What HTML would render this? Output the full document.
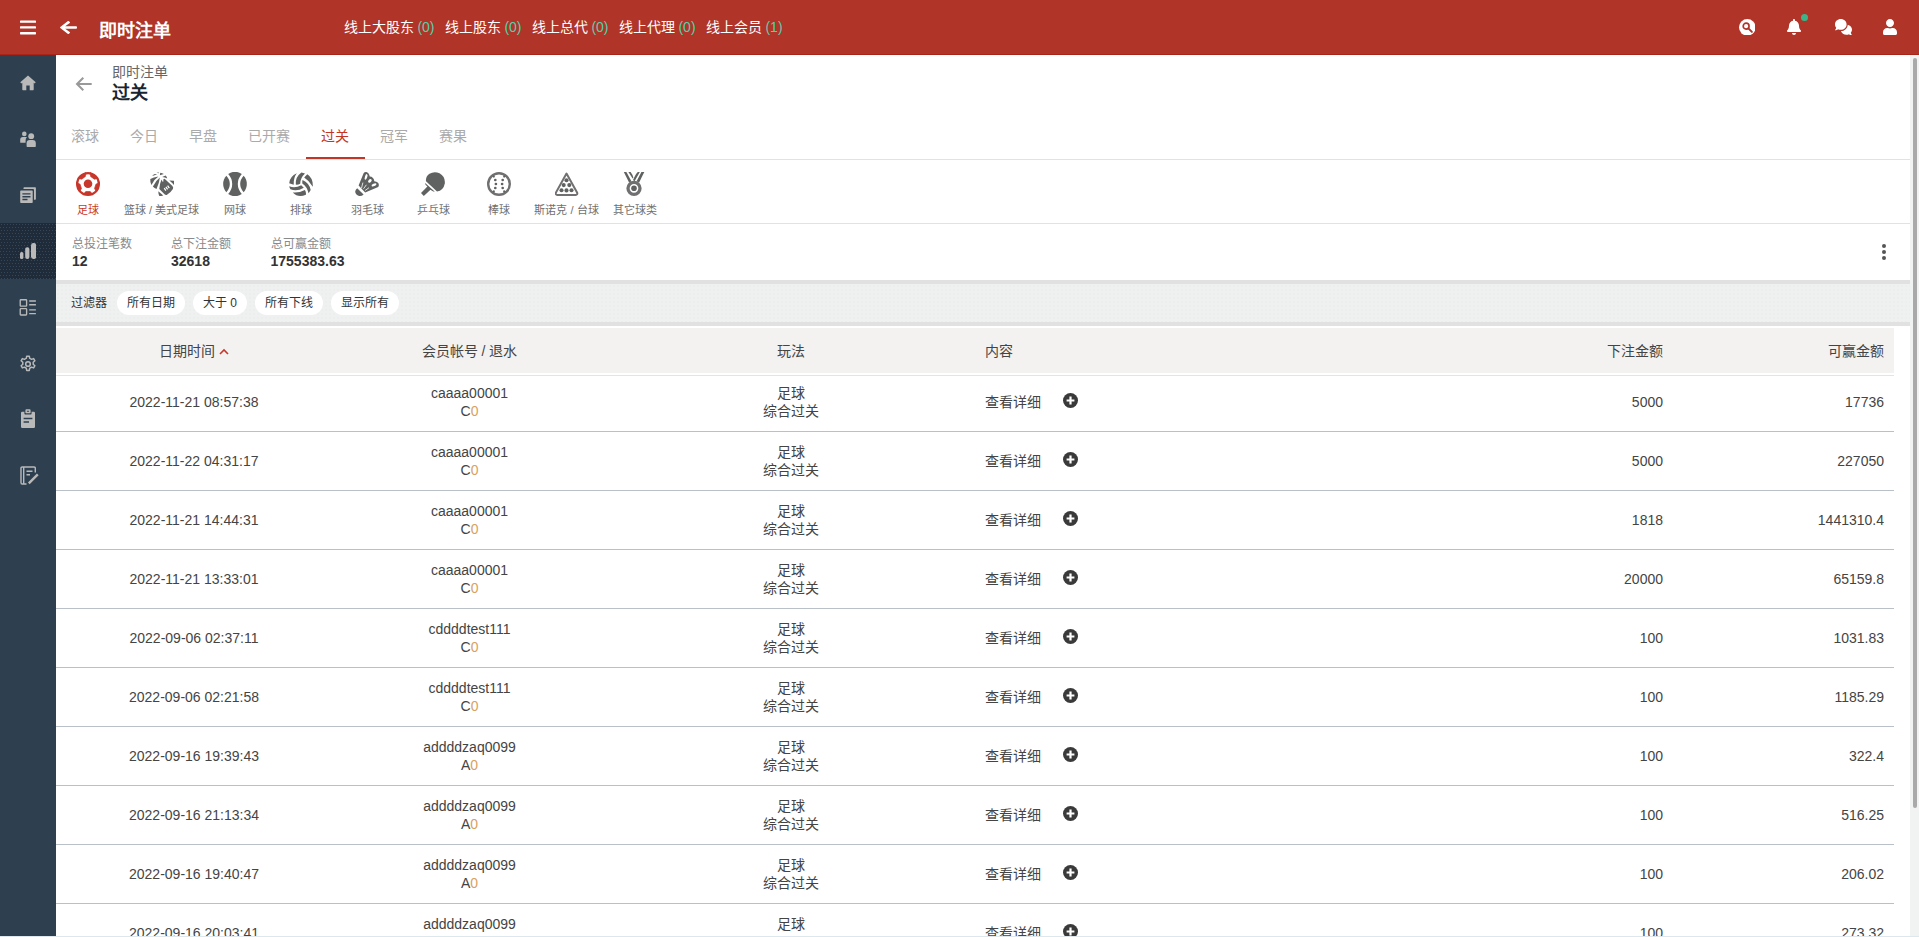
<!DOCTYPE html>
<html lang="zh-CN">
<head>
<meta charset="utf-8">
<title>即时注单</title>
<style>
*{box-sizing:border-box;margin:0;padding:0}
html,body{width:1919px;height:937px;overflow:hidden;background:#fff}
body{font-family:"Liberation Sans",sans-serif;font-size:14px;color:#444;position:relative}
.abs{position:absolute}
/* header */
#hdr{position:absolute;left:0;top:0;width:1919px;height:55px;background:#b03428;border-bottom:1px solid #a82418}
#hdr .title{position:absolute;left:99px;top:19px;font-size:18px;line-height:24px;font-weight:bold;color:#fff;white-space:nowrap}
#hdr .online{position:absolute;left:343.5px;top:17px;height:20px;line-height:20px;font-size:14px;color:#fff;white-space:nowrap}
#hdr .online span{display:inline-block;margin-right:10px}
#hdr .online b{font-weight:normal;color:#56cfa8}
/* sidebar */
#side{position:absolute;left:0;top:55px;width:56px;height:881px;background:#2e4050}
#side .it{position:absolute;left:0;width:56px;height:56px}
#side .it.act{background-color:#1f2b38;background-image:radial-gradient(circle at 0.5px 0.5px,#35485b 0.5px,transparent 0.55px),radial-gradient(circle at 0.5px 0.5px,#35485b 0.5px,transparent 0.55px);background-size:3px 6px;background-position:1px 1px,3px 4px}
#side svg{position:absolute;left:20px;top:20px;width:16px;height:16px}
/* content */
#main{position:absolute;left:56px;top:55px;width:1854px;height:882px;background:#fff;overflow:hidden}
.crumb{position:absolute;left:56px;top:8px;font-size:14px;line-height:18px;color:#666;white-space:nowrap}
.ptitle{position:absolute;left:56px;top:26px;font-size:18px;line-height:24px;font-weight:bold;color:#1a2532;white-space:nowrap}
.tabs{position:absolute;left:-0.5px;top:63px;height:41px;white-space:nowrap;font-size:0}
.tabs span{display:inline-block;height:41px;line-height:36px;padding:0 15.5px;font-size:14px;color:#aaa}
.tabs span.on{color:#c23527;border-bottom:2px solid #c23527}
.hline{position:absolute;left:0;width:1854px;height:1px;background:#e2e2e2}
.sp{position:absolute;top:117px;width:100px;text-align:center;margin-left:-50px;color:#707070;font-size:11px;line-height:14px;white-space:nowrap}
.sp svg{display:block;margin:0 auto 7px;width:24px;height:24px;fill:#606262}
.sp.on{color:#c8372b}
.sp.on svg{fill:#c8372b}
.st{position:absolute;top:181px;white-space:nowrap}
.st i{display:block;font-style:normal;font-size:12px;line-height:16px;color:#8a8a8a}
.st b{display:block;font-size:14px;line-height:18px;color:#333;margin-top:0}
#filt{position:absolute;left:0;top:225px;width:1854px;height:46px;border-top:4px solid #e1e1e1;border-bottom:4px solid #e1e1e1;background-color:#eff1f1;background-image:radial-gradient(circle,#e6e8e8 0.5px,transparent 0.8px);background-size:4px 4px}
#filt .lbl{position:absolute;left:15px;top:11px;font-size:12px;line-height:16px;color:#333}
#filt .chip{position:absolute;top:7px;height:24px;line-height:24px;border-radius:12px;background:#fff;font-size:12px;color:#333;padding:0 10px;white-space:nowrap}
/* table */
#tbl{position:absolute;left:0;top:273px;width:1838px}
#thead{position:absolute;left:0;top:0;width:1838px;height:45px;background:#f3f2f1}
#thead div{position:absolute;top:0;height:45px;line-height:47px;font-size:14px;color:#444;white-space:nowrap}
.row{position:absolute;left:0;width:1838px;height:59px;border-bottom:1px solid #b9c0c8}
.row div{position:absolute;white-space:nowrap;font-size:14px;line-height:18px;color:#444}
.c1{left:0;width:276px;text-align:center;top:20px}
.c2{left:276px;width:275px;text-align:center;top:11px}
.c2 em{font-style:normal;color:#d9a15f}
.c3{left:551px;width:368px;text-align:center;top:11px}
.c4{left:929px;top:20px}
.c5{left:919px;width:688px;text-align:right;top:20px}
.c6{left:1617px;width:211px;text-align:right;top:20px}
.row.last .c2,.row.last .c3{height:19px;overflow:hidden}
.plus{position:absolute;left:1007px;top:20px;width:15px;height:15px}
/* scrollbar */
#sb{position:absolute;left:1910px;top:55px;width:9px;height:882px;background:#f1f2f2}
#sb i{position:absolute;left:3px;top:3px;width:4px;height:750px;border-radius:2px;background:#a9a9a9}
</style>
</head>
<body>
<div id="hdr">
  <svg class="abs" style="left:20px;top:20px" width="16" height="15" viewBox="0 0 16 15"><rect x="0" y="0.5" width="16" height="2.3" rx="0.6" fill="#fff"/><rect x="0" y="6.3" width="16" height="2.3" rx="0.6" fill="#fff"/><rect x="0" y="12.1" width="16" height="2.3" rx="0.6" fill="#fff"/></svg>
  <svg class="abs" style="left:59.5px;top:19.5px" width="17" height="15" viewBox="0 0 448 512" preserveAspectRatio="none"><path fill="#fff" d="M257.5 445.1l-22.2 22.2c-9.4 9.4-24.6 9.4-33.9 0L7 273c-9.4-9.4-9.400-24.600 0-33.900L201.400 44.700c9.400-9.400 24.600-9.400 33.900 0l22.200 22.200c9.500 9.500 9.300 25-.4 34.300L136.600 216H424c13.300 0 24 10.700 24 24v32c0 13.300-10.700 24-24 24H136.600l120.500 114.800c9.800 9.300 10 24.800.4 34.300z"/></svg>
  <div class="title">即时注单</div>
  <div class="online"><span>线上大股东 <b>(0)</b></span><span>线上股东 <b>(0)</b></span><span>线上总代 <b>(0)</b></span><span>线上代理 <b>(0)</b></span><span>线上会员 <b>(1)</b></span></div>
<svg class="abs" style="left:1738.800px;top:18.700px" width="16.600" height="16.600" viewBox="0 0 17 17"><circle cx="8.500" cy="8.500" r="8.500" fill="#fff"/><circle cx="7.300" cy="7.300" r="3" fill="none" stroke="#b03428" stroke-width="1.700"/><path d="M9.600 9.600 L13.200 13.200" stroke="#b03428" stroke-width="2" stroke-linecap="round"/></svg>
<svg class="abs" style="left:1787px;top:19px" width="14" height="16" viewBox="0 0 448 512"><path fill="#fff" d="M224 512c35.320 0 63.970-28.650 63.970-64H160.030c0 35.350 28.650 64 63.970 64zm215.390-149.710c-19.320-20.760-55.470-51.990-55.470-154.290 0-77.700-54.480-139.900-127.940-155.160V32c0-17.670-14.320-32-31.980-32s-31.980 14.330-31.980 32v20.840C118.560 68.100 64.080 130.300 64.080 208c0 102.300-36.150 133.530-55.470 154.290-6 6.450-8.660 14.160-8.610 21.710.11 16.400 12.980 32 32.100 32h383.800c19.120 0 32-15.600 32.100-32 .05-7.550-2.610-15.270-8.610-21.710z"/></svg>
<div class="abs" style="left:1801px;top:14px;width:7px;height:7px;border-radius:50%;background:#3cb489"></div>
<svg class="abs" style="left:1834.500px;top:19px" width="17" height="16.4" viewBox="0 0 17 14.5" preserveAspectRatio="none"><path fill="#fff" d="M5.800 0 C2.600 0 0 2.100 0 4.800 C0 5.900 0.500 6.900 1.200 7.700 C1 8.500 0.500 9.300 0.100 9.700 C0 9.800 0.100 10 0.200 10 C1.300 10 2.300 9.600 3 9.100 C3.900 9.400 4.800 9.600 5.800 9.600 C9 9.600 11.600 7.500 11.600 4.800 C11.600 2.100 9 0 5.800 0 Z"/><path fill="#fff" d="M12.700 5 C12.600 8 9.600 10.700 5.900 10.700 C6.700 12.600 8.800 14 11.300 14 C12.300 14 13.200 13.800 14 13.500 C14.700 14 15.700 14.400 16.800 14.400 C17 14.400 17 14.200 16.900 14.100 C16.500 13.700 16 12.900 15.800 12.100 C16.500 11.300 17 10.300 17 9.200 C17 7.200 15.200 5.500 12.700 5 Z"/></svg>
<svg class="abs" style="left:1883px;top:19px" width="14" height="16" viewBox="0 0 448 512"><path fill="#fff" d="M224 256c70.700 0 128-57.300 128-128S294.700 0 224 0 96 57.300 96 128s57.300 128 128 128zm89.600 32h-16.700c-22.200 10.200-46.900 16-72.900 16s-50.600-5.800-72.900-16h-16.700C60.200 288 0 348.200 0 422.400V464c0 26.500 21.500 48 48 48h352c26.500 0 48-21.500 48-48v-41.600c0-74.200-60.200-134.400-134.400-134.400z"/></svg>
</div>
<div id="side">
<div class="it" style="top:0px"><svg style="" viewBox="0 0 16 16"><path fill="#b9b9b9" d="M8 0.6 L0.3 7.3 L1.3 8.5 L2.3 7.7 V14.6 Q2.3 15.2 2.9 15.2 H6.3 V10.6 H9.7 V15.2 H13.1 Q13.7 15.2 13.7 14.6 V7.7 L14.7 8.5 L15.7 7.3 Z"/></svg></div>
<div class="it" style="top:56px"><svg style="" viewBox="0 0 16 16"><circle cx="4.3" cy="2.9" r="2.3" fill="#b9b9b9"/><path fill="#b9b9b9" d="M0.2 11.2 V8.6 Q0.2 5.9 2.9 5.9 H5.5 Q6.4 5.9 7 6.3 Q5.6 7.4 5.6 9.2 V11.2 Q5.6 11.7 5.1 11.7 H0.7 Q0.2 11.7 0.2 11.2 Z"/><circle cx="11.2" cy="5.2" r="2.9" fill="#b9b9b9"/><path fill="#b9b9b9" d="M6.6 15.3 V12.3 Q6.6 9.1 9.8 9.1 H12.6 Q15.8 9.1 15.8 12.3 V15.3 Q15.8 16 15.1 16 H7.3 Q6.6 16 6.6 15.3 Z"/></svg></div>
<div class="it" style="top:112px"><svg style="" viewBox="0 0 16 16"><path fill="#b9b9b9" d="M4.2 0.2 H15.2 Q15.9 0.2 15.9 0.9 V12 Q15.9 12.7 15.2 12.7 H14 V3 Q14 2.1 13.1 2.1 H3.5 V0.9 Q3.5 0.2 4.2 0.2 Z"/><path fill="#b9b9b9" fill-rule="evenodd" d="M0.9 3.4 H12 Q12.7 3.4 12.7 4.1 V15.2 Q12.7 15.9 12 15.9 H0.9 Q0.2 15.9 0.2 15.2 V4.1 Q0.2 3.4 0.9 3.4 Z M2.4 6.2 V7.6 H10.5 V6.2 Z M2.4 9 V10.4 H10.5 V9 Z M2.4 11.8 V13.2 H7.5 V11.8 Z"/></svg></div>
<div class="it act" style="top:168px"><svg style="" viewBox="0 0 16 16"><rect x="0" y="9" width="3.400" height="7" rx="1.500" fill="#b9b9b9"/><rect x="5.200" y="4.200" width="4.200" height="11.800" rx="1.900" fill="#b9b9b9"/><rect x="11" y="0" width="5.200" height="16" rx="2.400" fill="#b9b9b9"/></svg></div>
<div class="it" style="top:224px"><svg style="left:19.2px;top:20px;width:17.5px;height:16.5px" viewBox="0 0 16 16" fill="none" stroke="#b9b9b9" stroke-width="1.3"><rect x="0.7" y="0.7" width="6.2" height="6.2" rx="0.6"/><rect x="0.7" y="9.3" width="6.2" height="6.2" rx="0.6"/><path d="M9.4 1.9 H15.9 M9.4 5.6 H15.9 M9.4 10.5 H15.9 M9.4 14.2 H15.9"/></svg></div>
<div class="it" style="top:280px"><svg style="left:19px;top:19.5px;width:18px;height:18px" viewBox="0 0 24 24" fill="none" stroke="#b9b9b9" stroke-width="2" stroke-linejoin="round"><path d="M10.3 1.5 h3.4 l0.6 3 a8 8 0 0 1 2.3 1.3 l2.9-1 l1.7 2.9 l-2.3 2 a8 8 0 0 1 0 2.6 l2.3 2 l-1.7 2.9 l-2.9-1 a8 8 0 0 1 -2.3 1.3 l-0.6 3 h-3.4 l-0.6-3 a8 8 0 0 1 -2.300-1.300 l-2.9 1 l-1.7-2.9 l2.3-2 a8 8 0 0 1 0-2.600 l-2.300-2 l1.700-2.900 l2.900 1 a8 8 0 0 1 2.300-1.300 z"/><circle cx="12" cy="12" r="3.1"/></svg></div>
<div class="it" style="top:336px"><svg style="left:20px;top:18.3px;width:16px;height:19.5px" viewBox="0 0 16 18" preserveAspectRatio="none"><path fill="#b9b9b9" fill-rule="evenodd" d="M2.200 2.600 H4.400 V4.200 Q4.400 5 5.200 5 H10.800 Q11.600 5 11.600 4.200 V2.600 H13.800 Q15 2.600 15 3.800 V16.400 Q15 17.600 13.800 17.600 H2.200 Q1 17.600 1 16.400 V3.800 Q1 2.600 2.200 2.600 Z M3.600 8 V9.400 H12.400 V8 Z M3.600 11.200 V12.600 H9 V11.200 Z"/><path fill="#b9b9b9" fill-rule="evenodd" d="M6.400 0.300 H9.600 Q10.600 0.300 10.600 1.300 V3.200 Q10.600 3.900 9.900 3.900 H6.100 Q5.400 3.900 5.400 3.200 V1.300 Q5.400 0.300 6.400 0.300 Z M6.900 1.500 V2.500 H9.100 V1.500 Z"/></svg></div>
<div class="it" style="top:392px"><svg style="left:19.7px;top:18.7px;width:19px;height:19px" viewBox="0 0 19 19" fill="none" stroke="#b9b9b9" stroke-width="1.4"><path d="M15.300 6.500 V2.200 Q15.300 1 14.100 1 H2.200 Q1 1 1 2.200 V16.800 Q1 18 2.200 18 H6.500"/><path d="M3.700 1 V18" /><path d="M6.500 5.300 H12.500 M6.500 8.700 H10"/><path d="M17.800 8.300 L8.800 17.300" stroke-width="2.400"/></svg></div>
</div>
<div id="main">
<svg class="abs" style="left:16px;top:17px" width="24" height="24" viewBox="0 0 24 24"><path d="M19.700 12 H5.600 M11.300 5.700 L5 12 L11.300 18.300" stroke="#999" stroke-width="2" fill="none"/></svg>
<div class="crumb">即时注单</div><div class="ptitle">过关</div>
<div class="tabs"><span class="">滚球</span><span class="">今日</span><span class="">早盘</span><span class="">已开赛</span><span class="on">过关</span><span class="">冠军</span><span class="">赛果</span></div>
<div class="hline" style="top:104px"></div>
<div class="sp on" style="left:32px"><svg fill="currentColor" viewBox="0 0 24 24"><circle cx="12" cy="12" r="10.900" fill="none" stroke="currentColor" stroke-width="2.200"/><path d="M14.30 19.60 L9.70 19.60 L7.10 22.60 L16.90 22.60 Z M5.48 16.54 L4.06 12.16 L0.40 10.62 L3.43 19.94 Z M5.67 7.20 L9.39 4.50 L9.73 0.54 L1.81 6.30 Z M14.61 4.50 L18.33 7.20 L22.19 6.30 L14.27 0.54 Z M19.94 12.16 L18.52 16.54 L20.57 19.94 L23.60 10.62 Z" stroke="currentColor" stroke-width="0.700" stroke-linejoin="round"/><circle cx="12" cy="11.800" r="4.300"/></svg>足球</div>
<div class="sp" style="left:105.5px"><svg fill="currentColor" viewBox="0 0 24 24"><path d="M0.300 7 Q3.500 5.200 8.400 4.600 Q3.500 8 1.400 12.900 Q0 10 0.300 7 Z"/><path d="M9.900 5.600 Q9.200 11.500 6.500 17 Q4.500 16.200 2.900 14.500 Q5.500 9 9.900 5.600 Z"/><path d="M2.200 4 Q3.200 2.800 4.800 2.100 L7.200 2.500 Q4.500 3 2.200 4 Z"/><path d="M6.600 0.700 Q7.800 0.300 9 0.500 L8.600 1.300 Z"/><path d="M10.300 0.700 Q12.200 0.900 13.900 1.900 L9.900 3.200 Z"/><path d="M12.200 4.900 L15.600 3.600 Q16.800 4.800 17.200 6.400 Q15 5 12.200 4.900 Z"/><path fill-rule="evenodd" d="M11.500 7.600 L12.600 9.800 L13.300 9.700 L13.400 7.200 L14.600 6.800 L22.400 14.100 Q23.700 15.500 22.900 17.100 Q20.600 21 16.700 22.900 Q15.400 23.300 14.500 22.200 L9.300 16.900 Q9.800 11.500 11.500 7.600 Z M13.700 16.400 l1.700 2.500 l1 -0.650 l-1.700 -2.500 Z M15.400 15.200 l1.700 2.500 l1 -0.650 l-1.700 -2.500 Z M17.100 14 l1.700 2.500 l1 -0.650 l-1.700 -2.500 Z"/><path d="M19.300 8.400 L23.900 8.800 Q24.400 11 24.200 13.200 Q22 10.500 19.300 8.400 Z"/><path d="M8.300 19.200 L13.300 23.400 Q11 24.300 9.400 24.100 Q8.300 22 8.300 19.200 Z"/></svg>篮球 / 美式足球</div>
<div class="sp" style="left:179px"><svg fill="currentColor" viewBox="0 0 24 24"><path d="M5.200 2.100 A12 12 0 0 1 18.800 2.100 Q14.800 6.500 14.800 12 Q14.800 17.500 18.800 21.900 A12 12 0 0 1 5.200 21.900 Q9.200 17.500 9.200 12 Q9.200 6.500 5.200 2.100 Z"/><path d="M3.400 3.800 Q6.800 7.500 6.800 12 Q6.800 16.500 3.400 20.200 A12 12 0 0 1 3.400 3.800 Z"/><path d="M20.600 3.800 Q17.200 7.500 17.200 12 Q17.200 16.500 20.600 20.200 A12 12 0 0 0 20.600 3.800 Z"/></svg>网球</div>
<div class="sp" style="left:245px"><svg fill="currentColor" viewBox="0 0 24 24"><path d="M7.800 1.300 Q0.800 4.500 0.200 11.200 L4.700 12.800 Q4.300 6 7.800 1.300 Z"/><path d="M12.400 0.400 L16 1.500 Q11.200 6 11.200 11.800 Q9 12.900 6.800 12.600 Q6 5 12.400 0.400 Z"/><path d="M15.200 5.500 L18.300 2.300 Q24.200 6 23.800 14.700 Q20 8.500 15.200 5.500 Z"/><path d="M13.500 8.100 Q20.200 11 21.700 18 L19.600 21.300 Q18 14.500 13.300 11.400 Q13.200 9.600 13.500 8.100 Z"/><path d="M0.200 14.200 Q6 16.500 12.200 13.200 L14.800 15.700 Q8 20 1.400 17.300 Q0.500 15.800 0.200 14.200 Z"/><path d="M3.800 20.400 Q10 21 15.900 18 Q17.300 20 16.900 22.700 Q9 26 3.800 20.400 Z"/></svg>排球</div>
<div class="sp" style="left:311px"><svg fill="currentColor" viewBox="0 0 24 24"><path d="M3.600 13.600 L8.600 1.200 Q9.600 -0.200 11.400 0.100 Q13.600 0.600 14.200 2.800 L14.800 4.600 Q16.600 4.600 18 6 Q19.200 7.400 19.300 9.200 Q21.600 9.200 23 10.800 Q24.600 12.800 23.200 14.900 L10.200 20.600 Z"/><ellipse cx="11.100" cy="4.900" rx="1.150" ry="2.900" fill="#fff" transform="rotate(18 11.100 4.900)"/><ellipse cx="14.900" cy="8.900" rx="1.500" ry="2.100" fill="#fff" transform="rotate(40 14.900 8.900)"/><ellipse cx="19" cy="12.900" rx="1.300" ry="2.600" fill="#fff" transform="rotate(66 19 12.900)"/><path d="M6.500 16.200 L7.900 10.600 M8.500 16.800 L11.400 12.800 M10.100 18.500 L14 15.700" stroke="#fff" stroke-width="0.800" fill="none"/><path d="M2.200 16.200 L8.600 22.400 Q6.500 24.500 3.500 23.800 Q0 22.500 0.300 19 Q0.800 17.200 2.200 16.200 Z"/></svg>羽毛球</div>
<div class="sp" style="left:377px"><svg fill="currentColor" viewBox="0 0 24 24"><path d="M5 9.300 Q4.500 4.500 8.500 1.800 Q13 -1 18.500 1.200 Q24.500 4.500 23.800 11.500 Q22.500 18.500 16 19.600 Z"/><path d="M4.200 11 L13.600 19.600 Q12 19.800 10.600 18.600 L9.500 17.800 L2.800 24 L0 21 L6.400 14.600 L5 13.200 Q4 12.200 4.200 11 Z"/></svg>乒乓球</div>
<div class="sp" style="left:443px"><svg fill="currentColor" viewBox="0 0 24 24"><circle cx="12" cy="12" r="10.800" fill="none" stroke="currentColor" stroke-width="2.400"/><g><circle cx="8.300" cy="8" r="1.350"/><circle cx="8.900" cy="12" r="1.350"/><circle cx="8.300" cy="16" r="1.350"/><circle cx="15.700" cy="8" r="1.350"/><circle cx="15.100" cy="12" r="1.350"/><circle cx="15.700" cy="16" r="1.350"/><circle cx="6.800" cy="4.600" r="1.100"/><circle cx="17.200" cy="4.600" r="1.100"/><circle cx="6.800" cy="19.400" r="1.100"/><circle cx="17.200" cy="19.400" r="1.100"/></g></svg>棒球</div>
<div class="sp" style="left:510.5px"><svg fill="currentColor" viewBox="0.500 0 24 24"><path d="M12 1.600 L22.700 20.800 Q23.200 22.700 21.200 22.900 H2.800 Q0.800 22.700 1.300 20.800 Z" fill="none" stroke="currentColor" stroke-width="2" stroke-linejoin="round"/><circle cx="12" cy="8.300" r="2.050"/><circle cx="9.200" cy="13.100" r="2.050"/><circle cx="14.800" cy="13.100" r="2.050"/><circle cx="7" cy="18.200" r="2.050"/><circle cx="12" cy="18.400" r="2.050"/><circle cx="17" cy="18.200" r="2.050"/></svg>斯诺克 / 台球</div>
<div class="sp" style="left:578.5px"><svg fill="currentColor" viewBox="1 0 24 24"><path d="M1.800 0 H4.400 L9.400 9.300 L7.200 10.800 Z"/><path d="M6.400 0 H8.600 Q10.600 2.500 11.400 5.800 L10.600 6.600 Z"/><path d="M22.300 0 H19.400 L14.600 9.200 L17 10.800 Z"/><path d="M17.800 0 H15.800 Q13.500 2 12.200 5.500 L11 8 L12.600 9.200 Z"/><circle cx="12" cy="16.300" r="6" fill="none" stroke="currentColor" stroke-width="3.300"/><circle cx="12" cy="16.300" r="2.800"/></svg>其它球类</div>
<div class="hline" style="top:168px"></div>
<div class="st" style="left:16px"><i>总投注笔数</i><b>12</b></div>
<div class="st" style="left:115px"><i>总下注金额</i><b>32618</b></div>
<div class="st" style="left:214.5px"><i>总可赢金额</i><b>1755383.63</b></div>
<svg class="abs" style="left:1825px;top:188px" width="6" height="18" viewBox="0 0 6 18"><circle cx="3" cy="3" r="2" fill="#555"/><circle cx="3" cy="9" r="2" fill="#555"/><circle cx="3" cy="15" r="2" fill="#555"/></svg>
<div id="filt"><div class="lbl">过滤器</div><div class="chip" style="left:61px">所有日期</div><div class="chip" style="left:137px">大于 0</div><div class="chip" style="left:199px">所有下线</div><div class="chip" style="left:275px">显示所有</div></div>
<div id="tbl"><div id="thead"><div style="left:0;width:276px;text-align:center">日期时间 <svg width="10" height="7" viewBox="0 0 10 7" style="vertical-align:1px"><path d="M1 6 L5 2 L9 6" fill="none" stroke="#c8372b" stroke-width="1.600"/></svg></div><div style="left:276px;width:275px;text-align:center">会员帐号 / 退水</div><div style="left:551px;width:368px;text-align:center">玩法</div><div style="left:929px">内容</div><div style="left:919px;width:688px;text-align:right">下注金额</div><div style="left:1617px;width:211px;text-align:right">可赢金额</div></div><div class="hline" style="top:47px;width:1838px;background:#e4e4e4"></div>
<div class="row" style="top:45px"><div class="c1">2022-11-21 08:57:38</div><div class="c2">caaaa00001<br>C<em>0</em></div><div class="c3">足球<br>综合过关</div><div class="c4">查看详细</div><svg class="plus" viewBox="0 0 15 15"><circle cx="7.500" cy="7.500" r="7.500" fill="#3a3a3a"/><path d="M7.500 3.600 V11.400 M3.600 7.500 H11.400" stroke="#fff" stroke-width="2.200"/></svg><div class="c5">5000</div><div class="c6">17736</div></div>
<div class="row" style="top:104px"><div class="c1">2022-11-22 04:31:17</div><div class="c2">caaaa00001<br>C<em>0</em></div><div class="c3">足球<br>综合过关</div><div class="c4">查看详细</div><svg class="plus" viewBox="0 0 15 15"><circle cx="7.500" cy="7.500" r="7.500" fill="#3a3a3a"/><path d="M7.500 3.600 V11.400 M3.600 7.500 H11.400" stroke="#fff" stroke-width="2.200"/></svg><div class="c5">5000</div><div class="c6">227050</div></div>
<div class="row" style="top:163px"><div class="c1">2022-11-21 14:44:31</div><div class="c2">caaaa00001<br>C<em>0</em></div><div class="c3">足球<br>综合过关</div><div class="c4">查看详细</div><svg class="plus" viewBox="0 0 15 15"><circle cx="7.500" cy="7.500" r="7.500" fill="#3a3a3a"/><path d="M7.500 3.600 V11.400 M3.600 7.500 H11.400" stroke="#fff" stroke-width="2.200"/></svg><div class="c5">1818</div><div class="c6">1441310.4</div></div>
<div class="row" style="top:222px"><div class="c1">2022-11-21 13:33:01</div><div class="c2">caaaa00001<br>C<em>0</em></div><div class="c3">足球<br>综合过关</div><div class="c4">查看详细</div><svg class="plus" viewBox="0 0 15 15"><circle cx="7.500" cy="7.500" r="7.500" fill="#3a3a3a"/><path d="M7.500 3.600 V11.400 M3.600 7.500 H11.400" stroke="#fff" stroke-width="2.200"/></svg><div class="c5">20000</div><div class="c6">65159.8</div></div>
<div class="row" style="top:281px"><div class="c1">2022-09-06 02:37:11</div><div class="c2">cddddtest111<br>C<em>0</em></div><div class="c3">足球<br>综合过关</div><div class="c4">查看详细</div><svg class="plus" viewBox="0 0 15 15"><circle cx="7.500" cy="7.500" r="7.500" fill="#3a3a3a"/><path d="M7.500 3.600 V11.400 M3.600 7.500 H11.400" stroke="#fff" stroke-width="2.200"/></svg><div class="c5">100</div><div class="c6">1031.83</div></div>
<div class="row" style="top:340px"><div class="c1">2022-09-06 02:21:58</div><div class="c2">cddddtest111<br>C<em>0</em></div><div class="c3">足球<br>综合过关</div><div class="c4">查看详细</div><svg class="plus" viewBox="0 0 15 15"><circle cx="7.500" cy="7.500" r="7.500" fill="#3a3a3a"/><path d="M7.500 3.600 V11.400 M3.600 7.500 H11.400" stroke="#fff" stroke-width="2.200"/></svg><div class="c5">100</div><div class="c6">1185.29</div></div>
<div class="row" style="top:399px"><div class="c1">2022-09-16 19:39:43</div><div class="c2">addddzaq0099<br>A<em>0</em></div><div class="c3">足球<br>综合过关</div><div class="c4">查看详细</div><svg class="plus" viewBox="0 0 15 15"><circle cx="7.500" cy="7.500" r="7.500" fill="#3a3a3a"/><path d="M7.500 3.600 V11.400 M3.600 7.500 H11.400" stroke="#fff" stroke-width="2.200"/></svg><div class="c5">100</div><div class="c6">322.4</div></div>
<div class="row" style="top:458px"><div class="c1">2022-09-16 21:13:34</div><div class="c2">addddzaq0099<br>A<em>0</em></div><div class="c3">足球<br>综合过关</div><div class="c4">查看详细</div><svg class="plus" viewBox="0 0 15 15"><circle cx="7.500" cy="7.500" r="7.500" fill="#3a3a3a"/><path d="M7.500 3.600 V11.400 M3.600 7.500 H11.400" stroke="#fff" stroke-width="2.200"/></svg><div class="c5">100</div><div class="c6">516.25</div></div>
<div class="row" style="top:517px"><div class="c1">2022-09-16 19:40:47</div><div class="c2">addddzaq0099<br>A<em>0</em></div><div class="c3">足球<br>综合过关</div><div class="c4">查看详细</div><svg class="plus" viewBox="0 0 15 15"><circle cx="7.500" cy="7.500" r="7.500" fill="#3a3a3a"/><path d="M7.500 3.600 V11.400 M3.600 7.500 H11.400" stroke="#fff" stroke-width="2.200"/></svg><div class="c5">100</div><div class="c6">206.02</div></div>
<div class="row last" style="top:576px"><div class="c1">2022-09-16 20:03:41</div><div class="c2">addddzaq0099<br>A<em>0</em></div><div class="c3">足球<br>综合过关</div><div class="c4">查看详细</div><svg class="plus" viewBox="0 0 15 15"><circle cx="7.500" cy="7.500" r="7.500" fill="#3a3a3a"/><path d="M7.500 3.600 V11.400 M3.600 7.500 H11.400" stroke="#fff" stroke-width="2.200"/></svg><div class="c5">100</div><div class="c6">273.32</div></div></div>
</div>
<div id="sb"><i></i></div>
<div class="abs" style="left:0;top:936px;width:1919px;height:1px;background:#dde8ee"></div>
</body>
</html>
